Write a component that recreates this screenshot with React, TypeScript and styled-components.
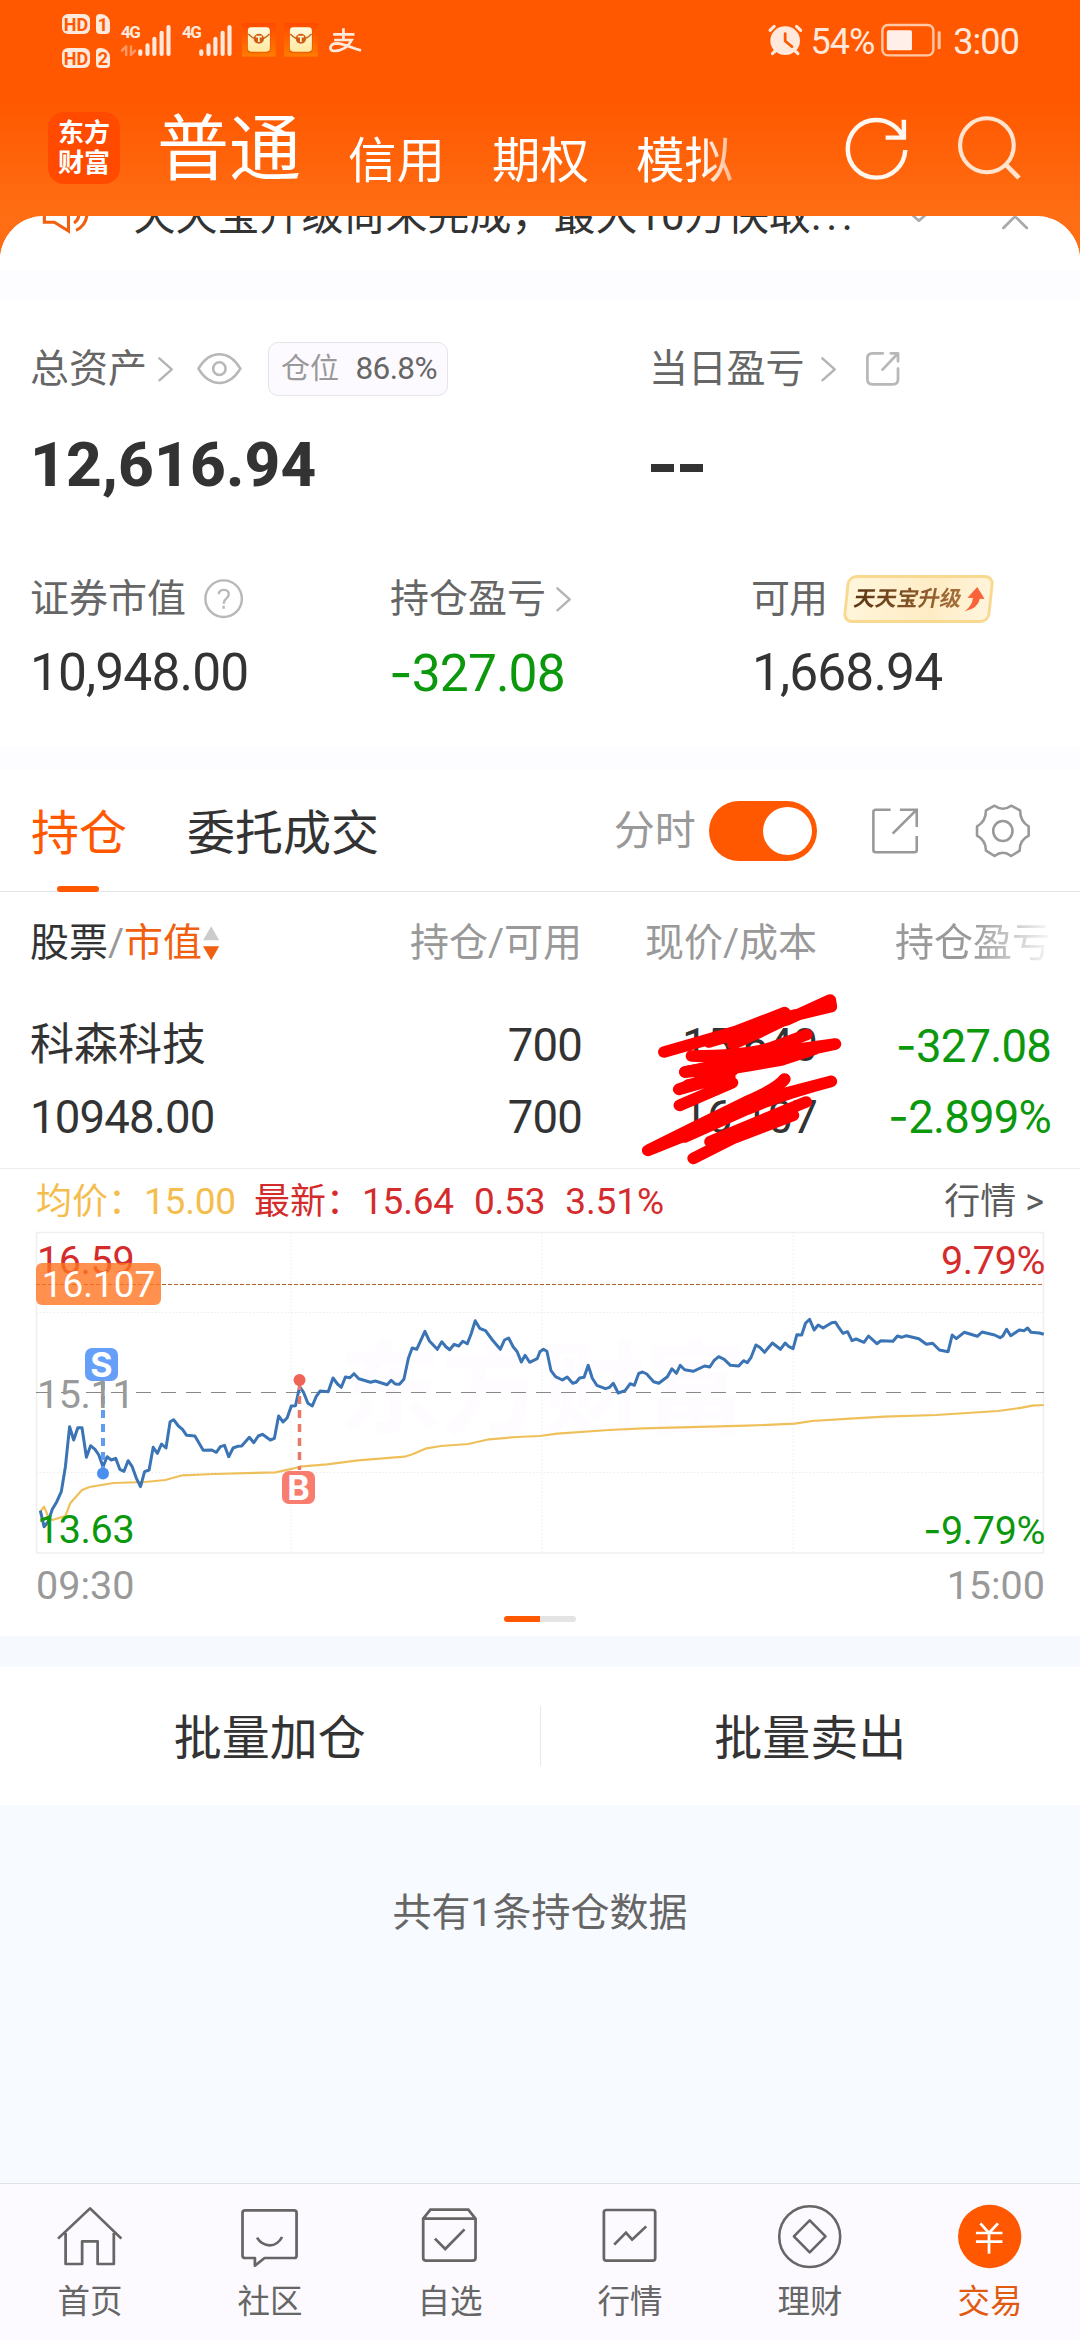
import React from "react";
import styled, { createGlobalStyle, css } from "styled-components";

const Global = createGlobalStyle`
  *{box-sizing:border-box}
  body{margin:0;background:#f7faff}
  #root{width:1080px}
`;

const sans = `Roboto, "Noto Sans CJK SC", sans-serif`;
const orange = "#ff5800";
const green = "#0c980c";
const red = "#d42c2c";

const Page = styled.div`
  width: 1080px;
  height: 2340px;
  overflow: hidden;
  display: flex;
  flex-direction: column;
  font-family: ${sans};
  color: #333;
  white-space: nowrap;
  background: linear-gradient(#ff5800 0, #ff5800 100px, #ff6e14 216px, #ff6c12 270px, #f7faff 270px);
`;

/* ---------- shared ---------- */
type TextProps = { $size: number; $color?: string; $gap?: number; $weight?: number };
const Text = styled.span<TextProps>`
  font-size: ${(p) => p.$size}px;
  line-height: ${(p) => Math.round(p.$size * 1.2)}px;
  color: ${(p) => p.$color ?? "#333"};
  letter-spacing: ${(p) => p.$gap ?? 0}px;
  font-weight: ${(p) => p.$weight ?? 400};
`;
/* A wider minus sign than Roboto's hyphen. */
const Minus = styled.span`
  font-family: Inter, ${sans};
`;
const Spacer = styled.i<{ $w: number }>`
  flex: none;
  width: ${(p) => p.$w}px;
`;
const Grow = styled.i`
  flex: 1;
`;
const Drawing = styled.svg<{ $w: number; $h: number }>`
  display: block;
  flex: none;
  width: ${(p) => p.$w}px;
  height: ${(p) => p.$h}px;
  fill: none;
  overflow: visible;
`;
type IconProps = {
  box: [number, number, number, number];
  stroke?: string;
  width?: number;
  round?: boolean;
  children: React.ReactNode;
};
/* Icons are drawn on a grid of 2.904 x 3 units per pixel. */
const Icon = ({ box, stroke, width = 7, round, children }: IconProps) => (
  <Drawing
    $w={box[2] / 2.904}
    $h={box[3] / 3}
    viewBox={box.join(" ")}
    preserveAspectRatio="none"
    stroke={stroke}
    strokeWidth={width}
    strokeLinecap={round ? "round" : "butt"}
    strokeLinejoin={round ? "round" : "miter"}
  >
    {children}
  </Drawing>
);

/* ---------- status bar ---------- */
const StatusBar = styled.div`
  height: 84px;
  flex: none;
  display: flex;
  align-items: center;
  padding: 0 61px 4px 62px;
`;
const SimStack = styled.div`
  display: grid;
  grid-template-columns: 28px 14px;
  gap: 14px 6px;
  padding-top: 1px;
`;
const SimChip = styled.span<{ $cut?: boolean }>`
  height: 20px;
  border-radius: ${(p) => (p.$cut ? "4px 9px 4px 4px" : "6px")};
  background: #ffe9dc;
  color: ${orange};
  font: 700 18px/21px ${sans};
  text-align: center;
`;
const Net = styled.div`
  position: relative;
  width: 50px;
  height: 31px;
`;
const NetLabel = styled.b`
  position: absolute;
  left: 0;
  top: -1px;
  font: 700 17px/17px ${sans};
  letter-spacing: -1.5px;
  color: #ffe9dc;
`;
const StatusText = styled.span`
  font-size: 36px;
  line-height: 40px;
  color: #ffe9dc;
  letter-spacing: -0.9px;
  padding-top: 4px;
`;

const Signal = ({ data }: { data?: boolean }) => (
  <Net>
    <NetLabel>4G</NetLabel>
    <Icon box={[353, 73, 146, 94]} stroke="#ffe9dc" width={12} round>
      <path d="M409 152V160M430 134V160M450 114V160M471 96V160M491 79V160" />
      {data && <path d="M356 150L368 137V163M394 150L382 163V137" stroke="#ff9a66" strokeWidth={7} />}
    </Icon>
  </Net>
);
const Packet = () => (
  <Icon box={[703, 73, 98, 101]}>
    <defs>
      <linearGradient id="pk" x1="0" y1="0" x2="0" y2="1">
        <stop offset="0" stopColor="#fffbe0" />
        <stop offset="1" stopColor="#ffe9a0" />
      </linearGradient>
      <linearGradient id="pb" x1="0" y1="0" x2="0" y2="1">
        <stop offset="0" stopColor="#ff4a00" />
        <stop offset="1" stopColor="#ff7c00" />
      </linearGradient>
    </defs>
    <rect x="703" y="73" width="98" height="101" fill="url(#pb)" />
    <rect x="718" y="88" width="68" height="75" rx="10" fill="#d94a00" opacity=".5" />
    <rect x="720" y="86" width="64" height="73" rx="10" fill="url(#pk)" />
    <path d="M721 106Q736 122 752 122Q768 122 783 106" stroke="#c9661c" strokeWidth="4" />
    <circle cx="752" cy="120" r="15" fill="#d25c14" />
    <path d="M743 114H761M752 114V130" stroke="#fff3c8" strokeWidth="5" />
  </Icon>
);

/* ---------- title bar ---------- */
const TitleBar = styled.div`
  height: 132px;
  flex: none;
  display: flex;
  align-items: center;
  padding: 0 59px 4px 48px;
`;
const Logo = styled.div`
  width: 72px;
  height: 72px;
  border-radius: 16px;
  background: #ff4a00;
  color: #fff;
  font: 700 26px/29.5px ${sans};
  text-align: center;
  padding-top: 7px;
  white-space: normal;
`;
const TitleTabs = styled.div`
  display: flex;
  align-items: flex-end;
  gap: 47px;
  margin-left: 37px;
  padding-top: 4px;
  mask-image: linear-gradient(90deg, #000 545px, rgba(0, 0, 0, 0.3) 590px);
`;
const TitleTab = styled.span<{ $on?: boolean }>`
  font-size: ${(p) => (p.$on ? 72 : 48.5)}px;
  line-height: ${(p) => (p.$on ? 86 : 63)}px;
  color: #fff;
`;
const TitleIcons = styled.div`
  display: flex;
  gap: 51px;
  padding-top: 2px;
`;

/* ---------- sheet ---------- */
const Sheet = styled.main`
  height: 1967px;
  flex: none;
  border-radius: 44px 44px 0 0;
  overflow: hidden;
  background: #f7faff;
  display: flex;
  flex-direction: column;
`;
const Notice = styled.div`
  height: 54px;
  flex: none;
  background: #fff;
  overflow: hidden;
`;
const NoticeRow = styled.div`
  height: 60px;
  margin-top: -30px;
  display: flex;
  align-items: center;
  padding: 0 52px 0 43px;
`;
const Band = styled.div<{ $h: number }>`
  height: ${(p) => p.$h}px;
  flex: none;
  background: #fdfcff;
`;
const Assets = styled.section`
  height: 446px;
  flex: none;
  background: #fff;
  padding: 42px 0 0 30px;
`;
const Line = styled.div<{ $h: number; $mt?: number }>`
  height: ${(p) => p.$h}px;
  margin-top: ${(p) => p.$mt ?? 0}px;
  display: flex;
  align-items: center;
`;
const Cell = styled.div<{ $w: number }>`
  width: ${(p) => p.$w}px;
  flex: none;
  display: flex;
  align-items: center;
`;
const Ratio = styled.span`
  width: 180px;
  height: 54px;
  border: 1px solid #e6e4e8;
  border-radius: 10px;
  background: #fdfaff;
  display: flex;
  align-items: center;
  justify-content: space-between;
  padding: 0 10px 0 12px;
`;
const Dash = styled.i`
  width: 23px;
  height: 8px;
  margin: 5px 6px 0 0;
  background: #333;
`;
const Upgrade = styled.span`
  width: 147px;
  height: 48px;
  margin-left: 18px;
  border: 3px solid #f8d98f;
  border-radius: 9px;
  background: linear-gradient(100deg, #fff6dc, #ffecc4 60%, #fff5dd);
  transform: skewX(-6deg);
  display: flex;
  align-items: center;
  padding-left: 6px;
`;
const UpgradeText = styled.b`
  font: 700 21.5px/26px ${sans};
  transform: skewX(-5deg);
  color: transparent;
  background: linear-gradient(90deg, #5a3412, #a8703a);
  background-clip: text;
  margin-right: 4px;
`;

const Tabs = styled.nav`
  height: 122px;
  flex: none;
  background: #fff;
  border-bottom: 1px solid #e3e3e3;
  display: flex;
  align-items: center;
  padding: 1px 50px 0 31px;
`;
const Tab = styled.span<{ $on?: boolean }>`
  position: relative;
  font-size: 48px;
  line-height: 60px;
  padding-top: 5px;
  color: ${(p) => (p.$on ? orange : "#333")};
  ${(p) =>
    p.$on &&
    css`
      &::after {
        content: "";
        position: absolute;
        left: 26px;
        bottom: -28px;
        width: 42px;
        height: 6px;
        border-radius: 3px;
        background: ${orange};
      }
    `}
`;
const Toggle = styled.span`
  width: 108px;
  height: 60px;
  margin-left: 13px;
  border-radius: 30px;
  background: ${orange};
  display: flex;
  justify-content: flex-end;
  padding: 6px 5px;
`;
const Knob = styled.i`
  width: 49px;
  height: 48px;
  border-radius: 50%;
  background: #fff;
`;

const Table = styled.section`
  position: relative;
  height: 277px;
  flex: none;
  background: #fff;
  border-bottom: 1px solid #ececec;
`;
const TableRow = styled.div<{ $h: number; $pad?: number }>`
  height: ${(p) => p.$h}px;
  display: grid;
  grid-template-columns: 302px 250px 235px 234px;
  align-items: center;
  padding-left: 30px;
  padding-top: ${(p) => p.$pad ?? 0}px;
  & > :nth-child(n + 2) {
    text-align: right;
  }
`;
const First = styled.div`
  display: flex;
  align-items: center;
`;
const Fading = styled.div`
  mask-image: linear-gradient(90deg, #000 155px, rgba(0, 0, 0, 0.06) 234px);
`;
const Scribble = styled.div`
  position: absolute;
  left: 640px;
  top: 98px;
`;

const ChartCard = styled.section`
  height: 467px;
  flex: none;
  background: #fff;
`;
const ChartHead = styled.div`
  height: 63px;
  display: flex;
  align-items: center;
  padding: 3px 36px 0 36px;
`;
const Plot = styled.div`
  position: relative;
  width: 1008px;
  height: 322px;
  margin-left: 36px;
  & > svg {
    position: absolute;
    left: 0;
    top: 0;
  }
`;
const Watermark = styled.div`
  position: absolute;
  left: 303px;
  top: 84px;
  font: 700 102px/150px ${sans};
  color: #fefcff;
`;
const Scale = styled.span<{ $y: number; $color: string; $right?: boolean }>`
  position: absolute;
  top: ${(p) => p.$y - 24}px;
  ${(p) => (p.$right ? "right: -1px;" : "left: 1px;")}
  font-size: 39.5px;
  line-height: 48px;
  letter-spacing: -0.4px;
  color: ${(p) => p.$color};
`;
const CostTag = styled.span`
  position: absolute;
  left: 0;
  top: 31px;
  width: 125px;
  height: 42px;
  border-radius: 6px;
  background: rgba(255, 116, 32, 0.8);
  color: #fff;
  font-size: 37px;
  line-height: 44px;
  text-align: center;
`;
const Marker = styled.b<{ $x: number; $y: number; $color: string }>`
  position: absolute;
  left: ${(p) => p.$x}px;
  top: ${(p) => p.$y}px;
  width: 33px;
  height: 33px;
  border-radius: 7px;
  background: ${(p) => p.$color};
  color: #fff;
  font: 700 34px/34px Inter, ${sans};
  text-align: center;
`;
const TimeAxis = styled.div`
  display: flex;
  justify-content: space-between;
  padding: 8px 35px 0 36px;
`;
const Pager = styled.div`
  width: 72px;
  height: 6px;
  margin: 7px 0 0 504px;
  border-radius: 3px;
  background: linear-gradient(90deg, ${orange} 50%, #e4e4e4 50%);
`;

const Actions = styled.section`
  height: 138px;
  flex: none;
  margin-top: 31px;
  background: #fff;
  display: grid;
  grid-template-columns: 1fr 1px 1fr;
  align-items: center;
  justify-items: center;
  box-shadow: 0 -31px 0 #f6faff;
`;
const Action = styled.span`
  font-size: 48px;
  line-height: 58px;
  padding-top: 6px;
`;
const Divider = styled.i`
  width: 1px;
  height: 60px;
  background: #e8e8e8;
`;
const Summary = styled.div`
  padding-top: 85px;
  text-align: center;
`;

/* ---------- bottom nav ---------- */
const BottomNav = styled.nav`
  height: 157px;
  flex: none;
  display: grid;
  grid-template-columns: repeat(6, 180px);
  background: #fdfaff;
  border-top: 1px solid #e2e2e4;
`;
const NavItem = styled.div`
  display: flex;
  flex-direction: column;
  align-items: center;
  gap: 13px;
`;
const NavIcon = styled.div`
  height: 86px;
  padding-top: 20px;
  display: flex;
  align-items: center;
`;

const Chevron = () => (
  <Icon box={[457, 110, 44, 74]} stroke="#b5b3b6" width={7} round>
    <path d="M461 114L497 147L461 180" />
  </Icon>
);

/* ---------- chart data: one list for each half of the session ---------- */
type Pt = [number, number];
const amPrice: Pt[] = [[117,1052],[128,1100],[140,1085],[152,1048],[165,1025],[178,995],[190,920],[202,800],[214,840],[226,803],[238,803],[251,892],[263,857],[276,868],[287,885],[299,920],[311,890],[323,900],[336,895],[348,928],[360,934],[372,902],[384,920],[396,955],[408,980],[420,935],[433,930],[445,862],[457,880],[469,852],[482,864],[494,785],[504,779],[518,798],[530,808],[542,826],[566,828],[590,871],[615,870],[628,877],[640,860],[652,856],[664,890],[677,864],[690,859],[702,858],[724,832],[737,848],[750,828],[762,823],[785,840],[797,835],[809,768],[822,786],[834,773],[846,738],[858,737],[870,680],[882,698],[894,730],[907,738],[918,710],[930,693],[953,695],[967,654],[980,672],[991,682],[1003,651],[1016,653],[1028,641],[1042,656],[1076,667],[1090,663],[1124,674],[1136,661],[1148,672],[1160,673],[1173,658],[1186,595],[1197,564],[1210,568],[1234,514],[1247,543],[1270,568],[1283,545],[1295,560],[1306,569],[1319,553],[1332,558],[1344,544],[1357,551],[1368,522],[1380,482],[1393,505],[1410,512],[1430,540],[1453,568],[1465,540],[1477,534],[1490,560],[1502,575],[1514,606],[1525,586],[1538,607],[1560,596],[1568,575]];
const pmPrice: Pt[] = [[10,568],[20,574],[32,632],[45,650],[65,660],[79,651],[95,670],[105,667],[115,654],[128,652],[140,616],[152,655],[165,676],[190,686],[202,682],[213,670],[227,699],[247,692],[262,671],[274,676],[287,640],[298,636],[310,642],[330,665],[345,670],[370,650],[383,626],[396,640],[407,616],[420,629],[445,634],[478,618],[493,621],[505,602],[519,590],[535,598],[553,616],[577,618],[591,602],[602,608],[613,592],[627,555],[638,562],[652,577],[675,549],[698,568],[712,549],[723,560],[735,566],[746,524],[760,525],[771,490],[783,478],[796,510],[808,495],[822,504],[847,488],[858,487],[868,503],[880,520],[893,515],[906,542],[918,537],[941,547],[954,528],[978,551],[990,542],[1025,544],[1038,528],[1050,532],[1064,527],[1100,536],[1122,553],[1140,550],[1160,570],[1185,575],[1197,525],[1209,536],[1232,517],[1270,529],[1284,516],[1320,525],[1336,533],[1344,528],[1355,508],[1367,527],[1392,510],[1406,512],[1416,504],[1426,517],[1450,519],[1463,523]];
const amAvg: Pt[] = [[117,1055],[128,1040],[140,1070],[152,1080],[190,1068],[204,1030],[238,990],[260,981],[330,969],[420,966],[480,960],[530,946],[620,942],[800,937],[850,926],[870,920],[950,913],[1040,901],[1175,890],[1200,882],[1235,866],[1280,858],[1360,852],[1420,838],[1500,831],[1568,828]];
const pmAvg: Pt[] = [[50,821],[200,810],[300,805],[600,797],[740,791],[790,783],[900,776],[1000,770],[1150,765],[1330,753],[1400,743],[1430,737],[1463,735]];
const trace = (am: Pt[], pm: Pt[]) =>
  [...am.map(([x, y]) => [x / 2.904, y / 3]), ...pm.map(([x, y]) => [540 + x / 2.904, y / 3])]
    .map(([x, y]) => `${(x - 36).toFixed(1)},${(y - 72).toFixed(1)}`)
    .join(" ");

const navs = [
  {
    label: "首页",
    icon: (
      <Icon box={[165, 108, 190, 190]} stroke="#666" width={8}>
        <path d="M168 209L261 118L352 209M190 192V285H238V217H283V285H330V192" strokeLinejoin="round" />
      </Icon>
    ),
  },
  {
    label: "社区",
    icon: (
      <Icon box={[688, 108, 190, 190]} stroke="#666" width={8} round>
        <path d="M712 124H854Q861 124 861 131V260Q861 267 854 267H768L740 290V267H712Q704 267 704 260V131Q704 124 712 124Z" />
        <path d="M746 206Q760 229 783 229Q806 229 819 204" strokeLinecap="butt" />
      </Icon>
    ),
  },
  {
    label: "自选",
    icon: (
      <Icon box={[1210, 108, 190, 190]} stroke="#666" width={8}>
        <path d="M1228 149L1249 122H1359L1380 149V266Q1380 275 1371 275H1237Q1228 275 1228 266ZM1228 149H1380M1262 209L1292 240L1348 181" />
      </Icon>
    ),
  },
  {
    label: "行情",
    icon: (
      <Icon box={[165, 108, 190, 190]} stroke="#666" width={8}>
        <rect x="185" y="123" width="149" height="152" rx="7" />
        <path d="M215 227L249 191L267 212L308 172" />
      </Icon>
    ),
  },
  {
    label: "理财",
    icon: (
      <Icon box={[688, 108, 190, 190]} stroke="#666" width={7.5}>
        <ellipse cx="783" cy="203" rx="88.5" ry="91" />
        <path d="M783 154L829 202L783 250L737 202Z" strokeLinejoin="round" />
      </Icon>
    ),
  },
  {
    label: "交易",
    on: true,
    icon: (
      <Icon box={[1211, 108, 190, 190]} stroke="#fff" width={8}>
        <ellipse cx="1306" cy="202.500" rx="92" ry="95" fill={orange} stroke="none" />
        <path d="M1279 163L1304 192L1330 163M1266 192H1343M1266 218H1343M1304 192V254" />
      </Icon>
    ),
  },
];

export default function App() {
  return (
    <Page>
      <Global />
      <StatusBar>
        <SimStack>
          <SimChip>HD</SimChip>
          <SimChip $cut>1</SimChip>
          <SimChip>HD</SimChip>
          <SimChip $cut>2</SimChip>
        </SimStack>
        <Spacer $w={11} />
        <Signal data />
        <Spacer $w={11} />
        <Signal />
        <Spacer $w={10} />
        <Packet />
        <Spacer $w={8} />
        <Packet />
        <Spacer $w={12} />
        <Icon box={[953, 84, 94, 78]} stroke="#ffe9dc" width={8}>
          <path d="M965 106H1027M995 88V122M968 123H1019Q1003 156 967 156C950 154 956 133 976 133C1000 134 1018 148 1046 154" />
        </Icon>
        <Grow />
        <Icon box={[665, 73, 96, 95]} stroke="#ffe9dc" width={9} round>
          <ellipse cx="712" cy="123" rx="43" ry="43" fill="#ffe9dc" stroke="none" />
          <path d="M668 92L680 80M757 92L745 80M675 162L684 153M749 162L740 153" />
          <path d="M712 102V124L732 141" stroke={orange} strokeWidth={8} />
        </Icon>
        <Spacer $w={8} />
        <StatusText>54%</StatusText>
        <Spacer $w={6} />
        <Icon box={[988, 73, 176, 98]} stroke="#ffc7a6" width={7} round>
          <rect x="992" y="76" width="148" height="91" rx="16" />
          <rect x="1005" y="92" width="73" height="60" rx="5" fill="#ffefe8" stroke="none" />
          <path d="M1157 99V144" strokeWidth={9} />
        </Icon>
        <Spacer $w={12} />
        <StatusText>3:00</StatusText>
      </StatusBar>

      <TitleBar>
        <Logo>东方 财富</Logo>
        <TitleTabs>
          <TitleTab $on>普通</TitleTab>
          <TitleTab>信用</TitleTab>
          <TitleTab>期权</TitleTab>
          <TitleTab>模拟</TitleTab>
        </TitleTabs>
        <Grow />
        <TitleIcons>
          <Icon box={[884, 352, 182, 190]} stroke="#fff8f0" width={13}>
            <path d="M1059 451C1057 498 1020 534 974 534C928 534 892 496 892 448C892 400 928 361 974 361C1010 361 1040 382 1053 414M1002 414H1055V360" />
          </Icon>
          <Icon box={[1214, 350, 182, 190]} stroke="#ffe4d0" width={12}>
            <ellipse cx="1298" cy="435" rx="78" ry="81" />
            <path d="M1351 491L1391 533" strokeWidth={14} />
          </Icon>
        </TitleIcons>
      </TitleBar>

      <Sheet>
        <Notice>
          <NoticeRow>
            <Icon box={[125, 598, 132, 100]} stroke="#f06010" width={9}>
              <path d="M129 626V668H158L199 694V600L158 626ZM215 670Q232 660 230 630M221 692Q257 674 253 626" />
            </Icon>
            <Spacer $w={45} />
            <Text $size={42}>天天宝升级尚未完成，最大10万快取</Text>
            <Text $size={42} $gap={4.5}>...</Text>
            <Grow />
            <Icon box={[1078, 625, 38, 40]} stroke="#aaa" width={8} round>
              <path d="M1068 633L1098 660L1128 633" />
            </Icon>
            <Spacer $w={77} />
            <Icon box={[1338, 600, 76, 80]} stroke="#aaa" width={8} round>
              <path d="M1342 675L1410 605M1342 605L1410 675" />
            </Icon>
          </NoticeRow>
        </Notice>
        <Band $h={30} />

        <Assets>
          <Line $h={54}>
            <Cell $w={619}>
              <Text $size={39} $color="#666">总资产</Text>
              <Spacer $w={11} />
              <Chevron />
              <Spacer $w={24} />
              <Icon box={[571, 95, 130, 94]} stroke="#b9b7ba" width={7.5}>
                <path d="M575 142Q600 99 636 99Q672 99 697 142Q672 185 636 185Q600 185 575 142Z" strokeLinejoin="round" />
                <ellipse cx="636" cy="142" rx="18" ry="19" />
              </Icon>
              <Spacer $w={26} />
              <Ratio>
                <Text $size={29} $color="#999">仓位</Text>
                <Text $size={31.5} $color="#666" $gap={-0.6}>86.8%</Text>
              </Ratio>
            </Cell>
            <Text $size={39} $color="#666" $gap={-0.2}>当日盈亏</Text>
            <Spacer $w={17} />
            <Chevron />
            <Spacer $w={30} />
            <Icon box={[945, 96, 98, 102]} stroke="#b9b7ba" width={8} round>
              <path d="M994 100H964Q949 100 949 115V178Q949 193 964 193H1023Q1038 193 1038 178V146M993 149L1036 102M1017 100H1038V124" />
            </Icon>
          </Line>
          <Line $h={70} $mt={34}>
            <Cell $w={621}>
              <Text $size={62} $weight={800} $gap={0.2}>12,616.94</Text>
            </Cell>
            <Dash />
            <Dash />
          </Line>
          <Line $h={54} $mt={72}>
            <Cell $w={360}>
              <Text $size={39} $color="#666">证券市值</Text>
              <Spacer $w={18} />
              <Icon box={[592, 776, 114, 118]} stroke="#b9b7ba" width={7}>
                <ellipse cx="649" cy="835" rx="53" ry="55" />
                <path d="M635 822C635 804 664 804 664 822C664 835 649 834 649 850M649 856V865" />
              </Icon>
            </Cell>
            <Cell $w={361}>
              <Text $size={39} $color="#666">持仓盈亏</Text>
              <Spacer $w={10} />
              <Chevron />
            </Cell>
            <Text $size={39} $color="#666" $gap={-1}>可用</Text>
            <Upgrade>
              <UpgradeText>天天宝升级</UpgradeText>
              <Icon box={[1236, 794, 54, 74]}>
                <path d="M1265 794L1290 830L1276 829Q1274 858 1236 867Q1256 850 1256 827L1240 826Z" fill="#fa6238" />
              </Icon>
            </Upgrade>
          </Line>
          <Line $h={60} $mt={17}>
            <Cell $w={359}>
              <Text $size={51.5} $gap={-0.9}>10,948.00</Text>
            </Cell>
            <Cell $w={363}>
              <Text $size={51.5} $gap={-0.9} $color={green}><Minus>-</Minus>327.08</Text>
            </Cell>
            <Text $size={51.5} $gap={-0.9}>1,668.94</Text>
          </Line>
        </Assets>
        <Band $h={24} />

        <Tabs>
          <Tab $on>持仓</Tab>
          <Spacer $w={60} />
          <Tab>委托成交</Tab>
          <Grow />
          <Text $size={41} $color="#999">分时</Text>
          <Toggle>
            <Knob />
          </Toggle>
          <Spacer $w={55} />
          <Icon box={[961, 113, 134, 138]} stroke="#999" width={7.5}>
            <path d="M1015 118H972Q965 118 965 125V239Q965 246 972 246H1084Q1091 246 1091 239V197M1021 190L1088 121M1042 118H1091V170" />
          </Icon>
          <Spacer $w={58} />
          <Icon box={[1263, 103, 157, 161]} stroke="#999" width={7.5}>
            <path d="M1317 108Q1341 126 1365 108L1391 122Q1391 156 1416 170V198Q1389 212 1390 243L1365 259Q1341 240 1317 259L1292 243Q1292 212 1266 198V170Q1292 156 1292 122Z" strokeLinejoin="round" />
            <ellipse cx="1341" cy="184" rx="28" ry="30" />
          </Icon>
        </Tabs>

        <Table>
          <TableRow $h={103}>
            <First>
              <Text $size={39}>股票</Text>
              <Text $size={39} $color="#999">/</Text>
              <Text $size={39} $color="#f06010">市值</Text>
              <Spacer $w={1} />
              <Icon box={[586, 464, 48, 104]}>
                <path d="M610 465L633 507H586Z" fill="#ccc" />
                <path d="M610 567L633 525H586Z" fill="#f06010" />
              </Icon>
            </First>
            <Text $size={39} $color="#999">持仓/可用</Text>
            <Text $size={39} $color="#999">现价/成本</Text>
            <Fading>
              <Text $size={39} $color="#999">持仓盈亏</Text>
            </Fading>
          </TableRow>
          <TableRow $h={94} $pad={7}>
            <Text $size={44}>科森科技</Text>
            <Text $size={45.5} $gap={-0.8}>700</Text>
            <Text $size={45.5} $gap={-0.8}>15.640</Text>
            <Text $size={45.5} $gap={-0.8} $color={green}><Minus>-</Minus>327.08</Text>
          </TableRow>
          <TableRow $h={55}>
            <Text $size={45.5} $gap={-0.8}>10948.00</Text>
            <Text $size={45.5} $gap={-0.8}>700</Text>
            <Text $size={45.5} $gap={-0.8}>16.107</Text>
            <Text $size={45.5} $gap={-0.8} $color={green}><Minus>-</Minus>2.899%</Text>
          </TableRow>
          <Scribble>
            <Icon box={[290, 660, 590, 530]} stroke="#f00" width={35} round>
              <path d="M360 846L600 775L710 728L490 816L720 748L842 690L845 710L730 738L560 822L640 785L725 742M774 794L690 826Q620 858 440 858L600 866L690 846L857 822L730 850L421 906L560 895L700 870L800 836M560 900L403 958L500 930L558 938L405 1006" />
              <path d="M421 906L690 850L500 900L600 885M430 945L550 920" />
              <path d="M710 927Q690 955 600 995L440 1076L313 1141L500 1064Q640 990 845 934L720 968L600 1018L420 1101M772 996L494 1115L620 1075L735 1036L560 1105L445 1165" />
            </Icon>
          </Scribble>
        </Table>

        <ChartCard>
          <ChartHead>
            <Text $size={36} $color="#f4bd4d">均价：</Text>
            <Text $size={37} $color="#f4bd4d" $gap={-0.2}>15.00</Text>
            <Spacer $w={18} />
            <Text $size={36} $color={red}>最新：</Text>
            <Text $size={37} $color={red} $gap={-0.2}>15.64</Text>
            <Spacer $w={20} />
            <Text $size={37} $color={red} $gap={-0.2}>0.53</Text>
            <Spacer $w={20} />
            <Text $size={37} $color={red} $gap={-0.1}>3.51%</Text>
            <Grow />
            <Text $size={36} $color="#5c5c5c">行情 &gt;</Text>
          </ChartHead>
          <Plot>
            <Watermark>东方财富</Watermark>
            <Drawing $w={1008} $h={322} viewBox="0 0 1008 322">
              <rect x=".5" y=".5" width="1007" height="320.500" stroke="#efeff1" strokeWidth="1.500" />
              <path d="M255 0V321M506 0V321M757 0V321M0 80.500H1008M0 240.500H1008" stroke="#ececee" strokeDasharray="1.500 2" />
              <path d="M0 160.500H1008" stroke="#888" strokeDasharray="15 10" />
              <path d="M0 52.500H1008" stroke="#b0602f" strokeWidth="1" strokeDasharray="4 2" />
              <polyline points={trace(amAvg, pmAvg)} stroke="#efbf5a" strokeWidth="2.200" strokeLinejoin="round" />
              <polyline points={trace(amPrice, pmPrice)} stroke="#3a74b4" strokeWidth="3" strokeLinejoin="round" />
              <path d="M67 242V140" stroke="#5f9cf0" strokeWidth="4" strokeDasharray="8 6" />
              <circle cx="67" cy="241.500" r="6" fill="#4a8ff0" />
              <path d="M263.500 150V238" stroke="#e87868" strokeWidth="3.500" strokeDasharray="8 6" />
              <circle cx="263.500" cy="148" r="6" fill="#f06455" />
            </Drawing>
            <Marker $x={49} $y={116} $color="#659ffa">S</Marker>
            <Marker $x={246} $y={239} $color="#f97d6e">B</Marker>
            <Scale $y={29} $color={red}>16.59</Scale>
            <Scale $y={163} $color="#999">15.11</Scale>
            <Scale $y={298} $color={green}>13.63</Scale>
            <Scale $y={29} $color={red} $right>9.79%</Scale>
            <Scale $y={298} $color={green} $right><Minus>-</Minus>9.79%</Scale>
            <CostTag>16.107</CostTag>
          </Plot>
          <TimeAxis>
            <Text $size={39.5} $color="#999">09:30</Text>
            <Text $size={39.5} $color="#999">15:00</Text>
          </TimeAxis>
          <Pager />
        </ChartCard>

        <Actions>
          <Action>批量加仓</Action>
          <Divider />
          <Action>批量卖出</Action>
        </Actions>
        <Summary>
          <Text $size={39} $color="#666">共有1条持仓数据</Text>
        </Summary>
      </Sheet>

      <BottomNav>
        {navs.map((n) => (
          <NavItem key={n.label}>
            <NavIcon>{n.icon}</NavIcon>
            <Text $size={32.5} $color={n.on ? "#e05a10" : "#666"}>{n.label}</Text>
          </NavItem>
        ))}
      </BottomNav>
    </Page>
  );
}
